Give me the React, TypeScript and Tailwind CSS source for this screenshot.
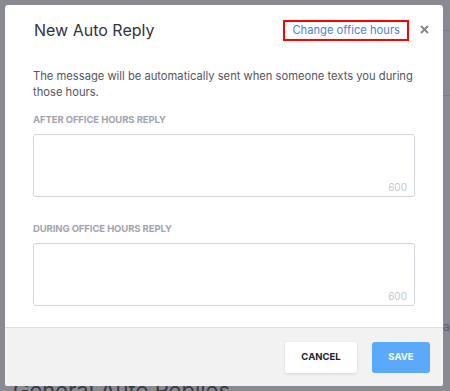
import React from "react";

function ReplyField({ label, className }: { label: string; className?: string }) {
  return (
    <div className={`flex flex-col ${className ?? ""}`}>
      <label className="text-[9.5px] font-bold uppercase leading-[14px] tracking-[-0.1px] text-[#a3a3b0]">
        {label}
      </label>
      <div className="relative mt-[7px] h-[63px] w-[382px] rounded-[3px] border border-[#d3d5dc] bg-white">
        <span className="absolute bottom-[1px] right-[7px] text-[10px] text-[#c4c6cc]">
          600
        </span>
      </div>
    </div>
  );
}

export default function App() {
  return (
    <div
      className="relative h-[391px] w-[450px] overflow-hidden bg-[#8a8a93]"
      style={{ fontFamily: "Inter, 'Noto Sans', sans-serif" }}
    >
      {/* page behind the overlay */}
      <div className="absolute left-[443px] top-[30px] h-px w-[10px] bg-[#7c7c85]" />
      <div className="absolute left-[443px] top-[95px] h-px w-[10px] bg-[#7c7c85]" />
      <div className="absolute left-[443px] top-[318px] text-[12px] text-[#5e5e66]">au</div>
      <div className="absolute left-[13px] top-[374px] text-[22px] text-[#3b3b44]">
        General Auto Replies
      </div>

      <div className="relative ml-[5px] mt-[5px] flex w-[438px] flex-col overflow-hidden rounded-[3px] bg-white">
        <div className="flex h-[37px] items-end pl-[29px] pr-[14px]">
          <h2 className="text-[16px] leading-[24px] text-[#33333d]">New Auto Reply</h2>
          <div className="mb-[1px] ml-auto border-2 border-[#ff0000] px-[7px] text-[11.2px] leading-[17px] text-[#4d82d6]">
            Change office hours
          </div>
          <svg
            className="mb-[8px] ml-[11px]"
            width="9"
            height="9"
            viewBox="0 0 9 9"
            fill="none"
            stroke="#86868c"
            strokeWidth="2"
          >
            <path d="M1 1l7 7M8 1L1 8" />
          </svg>
        </div>

        <div className="flex flex-col px-[28px] pb-[21px] pt-[26px]">
          <p className="text-[11.2px] leading-[16px] text-[#55555f]">
            <span className="block whitespace-nowrap">
              The message will be automatically sent when someone texts you during
            </span>
            <span className="block">those hours.</span>
          </p>
          <ReplyField label="After office hours reply" className="mt-[13px]" />
          <ReplyField label="During office hours reply" className="mt-[25px]" />
        </div>

        <div className="flex h-[59px] items-center justify-end gap-[15px] border-t border-[#dcdde3] bg-[#f2f2f2] pr-[13px]">
          <button className="h-[31px] w-[72px] rounded-[3px] bg-white text-[9.5px] font-bold text-[#22222a] shadow-[0_1px_3px_rgba(0,0,0,0.12)]">
            CANCEL
          </button>
          <button className="h-[31px] w-[58px] rounded-[3px] bg-[#5aa9fa] text-[9.5px] font-bold text-white">
            SAVE
          </button>
        </div>
      </div>
    </div>
  );
}
